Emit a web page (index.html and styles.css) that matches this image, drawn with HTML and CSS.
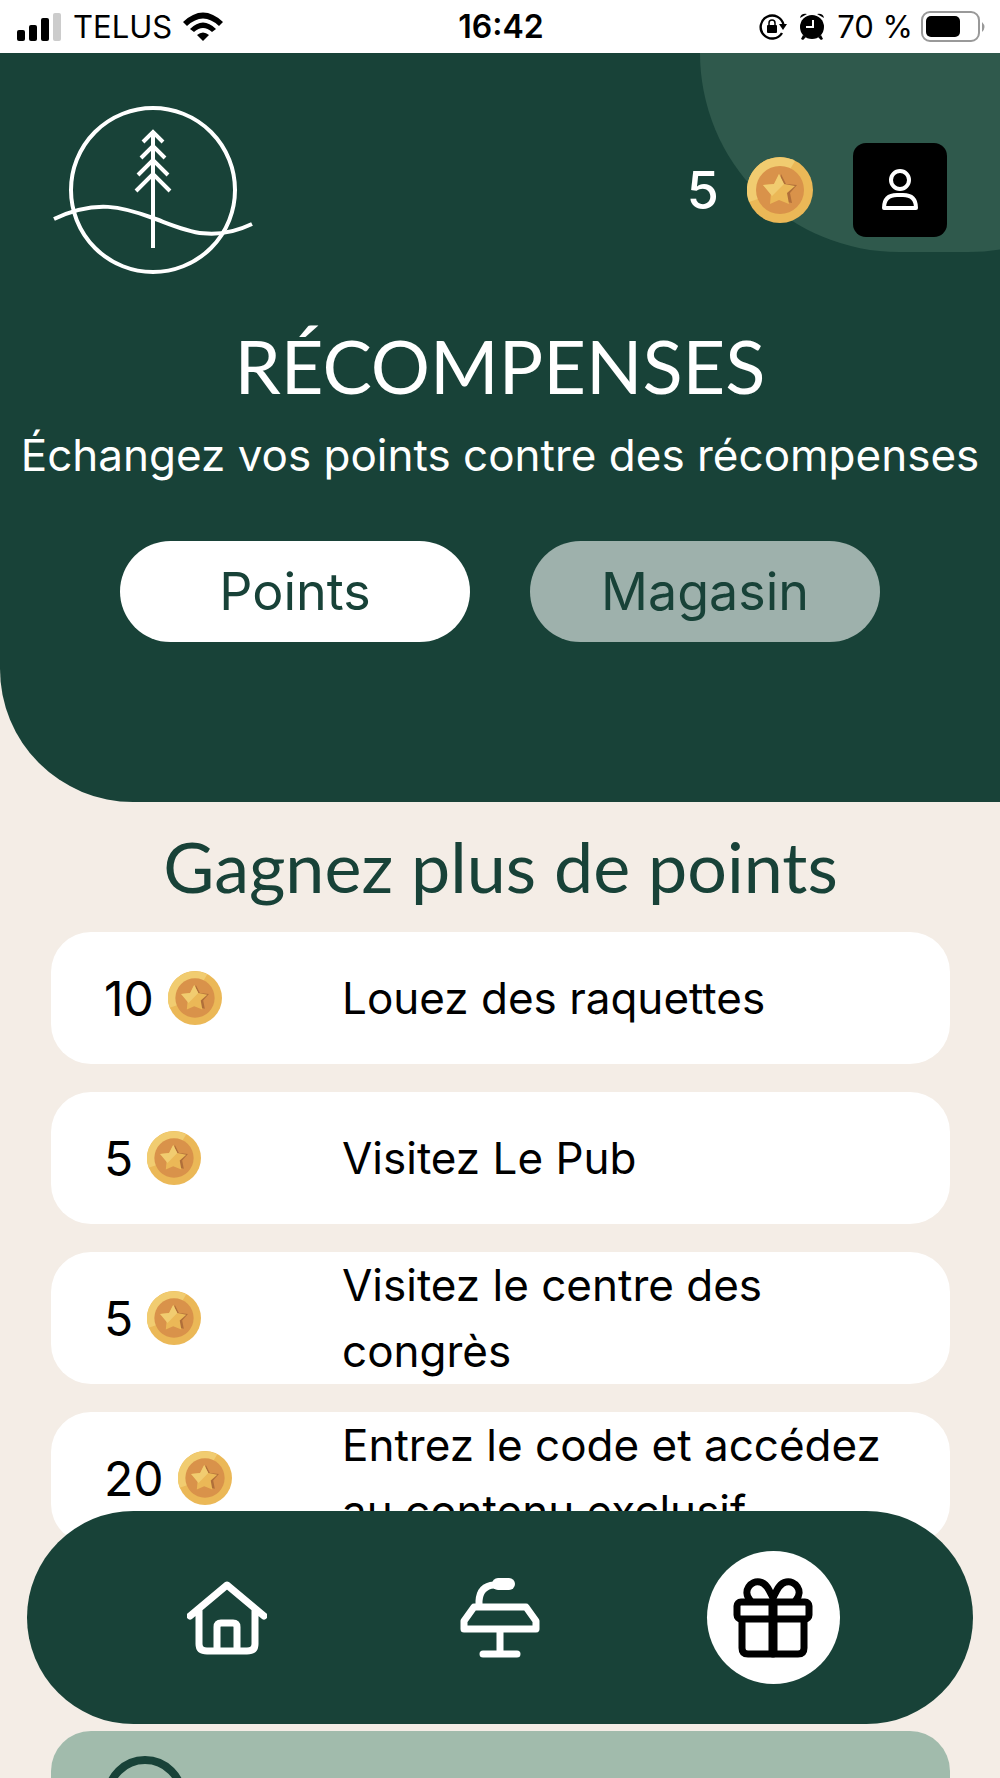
FILE: index.html
```html
<!DOCTYPE html>
<html lang="fr">
<head>
    <meta charset="UTF-8">
    <meta name="viewport" content="width=device-width, initial-scale=1.0">
    <title>Récompenses</title>
    <link rel="stylesheet" href="styles.css">
</head>
<body>
    <!-- Shared coin symbol -->
    <svg class="symbols" aria-hidden="true">
        <symbol id="coin" viewBox="0 0 66 66">
            <circle cx="33" cy="33" r="33" fill="#ebb857"/>
            <path d="M2 45A33 33 0 0 1 48 4L42 14 11 42z" fill="#f1cc70"/>
            <circle cx="33" cy="33" r="24" fill="#d9924a"/>
            <path d="M34 17l5 10 11 1-7 8 2 10-5-1-9-5z" fill="#b06f3a"/>
            <path d="M32 17l5 10 11 2-8 7 2 11-10-4-9 4 1-11-8-8 11-1z" fill="#ebb857"/>
            <path d="M32 17l5 10-12 12-9-11 11-1z" fill="#f1cc70"/>
        </symbol>
    </svg>

    <div class="status-bar">
        <div class="status-left">
            <svg width="45" height="28" viewBox="0 0 45 28">
                <rect x="0" y="17" width="8" height="11" rx="2"/>
                <rect x="12" y="12" width="8" height="16" rx="2"/>
                <rect x="24" y="5" width="8" height="23" rx="2"/>
                <rect x="36" y="0" width="8" height="28" rx="2" fill="#ccc"/>
            </svg>
            <span>TELUS</span>
            <svg width="40" height="29" viewBox="0 0 40 29">
                <path d="M0 10Q20-9 40 10L36 14Q20-1 4 14z"/>
                <path d="M7 17Q20 4 33 17L29 20Q20 12 11 20z"/>
                <path d="M14 23Q20 18 26 23L20 29z"/>
            </svg>
        </div>
        <div class="status-time">16:42</div>
        <div class="status-right">
            <svg class="lock" width="28" height="28" viewBox="0 0 28 28">
                <path d="M23 20A11.500 11.500 0 1 1 24.500 12" fill="none" stroke="#000" stroke-width="2.400"/>
                <path d="M20 11h8l-4 6z"/>
                <rect x="8" y="12" width="10" height="8" rx="1"/>
                <path d="M10 13v-3a3 3 0 0 1 6 0v3" fill="none" stroke="#000" stroke-width="1.500"/>
            </svg>
            <svg class="alarm" width="24" height="27" viewBox="0 0 24 27">
                <circle cx="12" cy="14" r="12"/>
                <path d="M0 5Q1 0 7 1zM24 5Q23 0 17 1zM3 22l3 2-3 3-2-1zM21 22l-3 2 3 3 2-1z"/>
                <path d="M13 7v7H6" fill="none" stroke="#fff" stroke-width="2"/>
            </svg>
            <span>70 %</span>
            <svg width="64" height="31" viewBox="0 0 64 31">
                <rect x="1" y="1" width="57" height="29" rx="8" fill="none" stroke="#999" stroke-width="2"/>
                <rect x="5" y="5" width="34" height="21" rx="5"/>
                <path d="M61 11q5 5 0 10z" fill="#999"/>
            </svg>
        </div>
    </div>

    <header class="header">
        <div class="header-top">
            <svg class="logo" viewBox="0 0 200 168" role="img" aria-label="Logo">
                <circle cx="100" cy="84" r="82"/>
                <path d="M1 113C43 93 70 101 100 112S157 138 199 118"/>
                <path d="M100 27V142M90 36l10-10 10 10M88 52l12-12 12 12M85 69l15-15 15 15M83 85l17-17 17 17"/>
            </svg>
            <div class="account">
                <span class="balance">5</span>
                <svg class="coin-large"><use href="#coin"/></svg>
                <button class="profile-btn" aria-label="Profil">
                    <svg width="36" height="42" viewBox="0 0 36 42">
                        <circle cx="18" cy="11" r="9"/>
                        <path d="M2 39q0-13 13-13h6q13 0 13 13z"/>
                    </svg>
                </button>
            </div>
        </div>
        <h1>RÉCOMPENSES</h1>
        <p class="subtitle">Échangez vos points contre des récompenses</p>
        <div class="tabs">
            <button class="tab active">Points</button>
            <button class="tab">Magasin</button>
        </div>
    </header>

    <main class="content">
        <h2>Gagnez plus de points</h2>
        <ul class="reward-list">
            <li class="reward">
                <span class="cost">10 <svg class="coin"><use href="#coin"/></svg></span>
                <span class="reward-text">Louez des raquettes</span>
            </li>
            <li class="reward">
                <span class="cost">5 <svg class="coin"><use href="#coin"/></svg></span>
                <span class="reward-text">Visitez Le Pub</span>
            </li>
            <li class="reward">
                <span class="cost">5 <svg class="coin"><use href="#coin"/></svg></span>
                <span class="reward-text">Visitez le centre des congrès</span>
            </li>
            <li class="reward">
                <span class="cost">20 <svg class="coin"><use href="#coin"/></svg></span>
                <span class="reward-text">Entrez le code et accédez au contenu exclusif</span>
            </li>
        </ul>
        <div class="reward completed">
            <svg class="check" viewBox="0 0 82 82"><circle cx="41" cy="41" r="37"/></svg>
        </div>
    </main>

    <nav class="bottom-nav">
        <a href="#" class="nav-item" aria-label="Accueil">
            <svg viewBox="0 0 80 80">
                <path d="M3 38L40 7l37 31M12 32v34q0 7 8 7h40q8 0 8-7V32M30 72V49q0-4 4-4h12q4 0 4 4v23"/>
            </svg>
        </a>
        <a href="#" class="nav-item" aria-label="Conférences">
            <svg viewBox="0 0 80 80">
                <path d="M19 28V23Q20 8 34 7M14 29h52l10 14v8H4v-8zM40 52v23M23 76h34"/>
                <path d="M38 6h11" stroke-width="12"/>
            </svg>
        </a>
        <a href="#" class="nav-item active" aria-label="Récompenses">
            <svg viewBox="0 0 80 80">
                <rect x="4" y="24" width="72" height="17" rx="4"/>
                <path d="M9 42v28q0 6 6 6h50q6 0 6-6V42"/>
                <path d="M40 24v51" stroke-width="9"/>
                <path d="M17 22C9 13 18 2 27 4c7 1 10 10 13 16C43 14 46 5 53 4c9-2 18 9 10 18"/>
            </svg>
        </a>
    </nav>
</body>
</html>
```
FILE: styles.css
```css
* { margin: 0; padding: 0; box-sizing: border-box; }

body {
    font-family: Inter, sans-serif;
    background: #f4ede6;
    color: #000;
    height: 100vh;
    overflow: hidden;
}

svg {
    display: block;
    flex-shrink: 0;
}

button {
    border: none;
    font-family: inherit;
    cursor: pointer;
}

.symbols {
    position: absolute;
    width: 0;
    height: 0;
}

/* Status bar */
.status-bar {
    display: grid;
    grid-template-columns: 1fr auto 1fr;
    align-items: center;
    height: 53px;
    padding: 0 15px 0 17px;
    background: #fff;
    font-size: 31px;
}

.status-left, .status-right {
    display: flex;
    align-items: center;
    gap: 11px;
}

.status-right {
    justify-content: flex-end;
    gap: 8px;
}

.status-right .lock,
.status-right .alarm {
    margin-right: 5px;
}

.status-time {
    font-size: 32px;
    font-weight: 600;
}

/* Header */
.header {
    position: relative;
    overflow: hidden;
    padding: 53px 0 160px;
    background: #184238;
    border-bottom-left-radius: 133px;
    color: #fff;
    text-align: center;
}

.header::before {
    content: "";
    position: absolute;
    top: 0;
    left: 70%;
    width: 467px;
    height: 199px;
    background: #2f594c;
    border-radius: 0 0 200px 200px;
}

.header-top {
    position: relative;
    display: flex;
    align-items: center;
    justify-content: space-between;
    padding: 0 53px;
}

.logo {
    width: 200px;
    height: 168px;
    fill: none;
    stroke: #fff;
    stroke-width: 4;
}

.account {
    display: flex;
    align-items: center;
}

.balance {
    font-size: 52px;
    font-weight: 500;
}

.coin-large {
    width: 66px;
    height: 66px;
    margin: 0 40px 0 28px;
}

.profile-btn {
    display: flex;
    align-items: center;
    justify-content: center;
    width: 94px;
    height: 94px;
    background: #000;
    border-radius: 13px;
}

.profile-btn svg {
    fill: none;
    stroke: #fff;
    stroke-width: 4;
    stroke-linejoin: round;
}

h1, h2 {
    font-family: Lato, sans-serif;
    font-weight: 400;
    line-height: 76px;
}

h1 {
    margin-top: 54px;
    font-size: 74px;
}

.subtitle {
    margin-top: 18px;
    font-size: 44px;
    line-height: 66px;
}

.tabs {
    display: flex;
    gap: 60px;
    margin-top: 53px;
    padding: 0 120px;
}

.tab {
    flex: 1;
    height: 101px;
    border-radius: 51px;
    background: #9eb1ac;
    color: #184238;
    font-size: 52px;
}

.tab.active {
    background: #fff;
}

/* Rewards */
.content {
    padding: 26px 50px 0 51px;
}

h2 {
    color: #184238;
    font-size: 70px;
    text-align: center;
}

.reward-list {
    display: flex;
    flex-direction: column;
    gap: 28px;
    margin-top: 28px;
    list-style: none;
}

.reward {
    display: flex;
    align-items: center;
    min-height: 132px;
    padding: 0 40px 0 53px;
    background: #fff;
    border-radius: 40px;
}

.cost {
    display: flex;
    align-items: center;
    gap: 14px;
    width: 238px;
    flex-shrink: 0;
    font-size: 48px;
}

.coin {
    width: 54px;
    height: 54px;
}

.reward-text {
    font-size: 44px;
    line-height: 66px;
}

.completed {
    margin-top: 187px;
    background: #a1bbac;
}

.check {
    width: 82px;
    height: 82px;
    fill: none;
    stroke: #184238;
    stroke-width: 8;
}

/* Bottom navigation */
.bottom-nav {
    position: fixed;
    left: 27px;
    right: 27px;
    bottom: 54px;
    display: flex;
    align-items: center;
    justify-content: center;
    gap: 140px;
    height: 213px;
    background: #184238;
    border-radius: 107px;
}

.nav-item {
    display: flex;
    align-items: center;
    justify-content: center;
    width: 133px;
    height: 133px;
    border-radius: 50%;
    color: #fff;
}

.nav-item.active {
    background: #fff;
    color: #000;
}

.nav-item svg {
    width: 80px;
    height: 80px;
    fill: none;
    stroke: currentColor;
    stroke-width: 7;
    stroke-linecap: round;
    stroke-linejoin: round;
}
```
